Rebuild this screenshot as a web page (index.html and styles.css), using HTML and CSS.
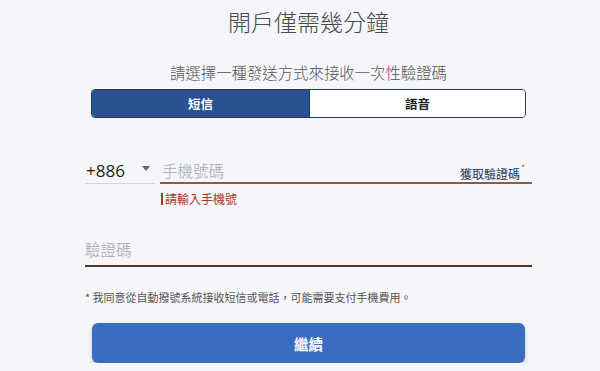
FILE: index.html
```html
<!DOCTYPE html>
<html lang="zh-Hant">
<head>
<meta charset="utf-8">
<title>開戶僅需幾分鐘</title>
<link rel="stylesheet" href="styles.css">
</head>
<body>
<main class="page">
  <h1 class="title">開戶僅需幾分鐘</h1>
  <p class="subtitle">請選擇一種發送方式來接收一次性驗證碼</p>
  <div class="toggle">
    <button class="seg seg-on">短信</button>
    <button class="seg">語音</button>
  </div>
  <div class="phone-row">
    <div class="country">
      <span class="code">+886</span>
      <svg class="caret" width="8" height="6" viewBox="0 0 8 6"><path d="M0 0 L8 0 L4 5 Z" fill="#666"/></svg>
    </div>
    <div class="phone">
      <span class="ph">手機號碼</span>
      <a class="get-code">獲取驗證碼<sup>*</sup></a>
    </div>
  </div>
  <div class="error"><span class="bar"></span>請輸入手機號</div>
  <div class="code-field"><span class="ph">驗證碼</span></div>
  <p class="consent">* 我同意從自動撥號系統接收短信或電話，可能需要支付手機費用。</p>
  <button class="submit">繼續</button>
</main>
</body>
</html>
```
FILE: styles.css
```css
html, body {
  margin: 0;
  padding: 0;
  background: #f4f6f9;
}
body {
  font-family: "Noto Sans CJK TC", "Noto Sans", sans-serif;
  color: #333;
}
.page {
  width: 447px;
  margin-left: 85px;
  display: flex;
  flex-direction: column;
}
.title {
  margin: 6px 0 0;
  font-size: 23px;
  line-height: 30px;
  font-weight: 300;
  text-align: center;
  color: #4a4a4a;
}
.subtitle {
  margin: 26px 0 0;
  font-size: 15.4px;
  line-height: 20px;
  font-weight: 300;
  text-align: center;
  color: #555;
}
.toggle {
  margin: 7px 6px 0;
  height: 29px;
  display: flex;
  border: 1px solid #2a3a50;
  border-radius: 4px;
  overflow: hidden;
  box-sizing: border-box;
  background: #fff;
}
.seg {
  flex: 1;
  border: 0;
  margin: 0;
  padding: 0;
  background: #fff;
  font-family: inherit;
  font-size: 12.5px;
  font-weight: 700;
  color: #222;
}
.seg-on {
  flex: 0 0 218px;
  background: #2a5293;
  color: #fff;
  border-right: 1px solid #2a3a50;
}
.phone-row {
  margin-top: 39px;
  display: flex;
  align-items: flex-end;
  gap: 5px;
}
.country {
  width: 70px;
  height: 26px;
  display: flex;
  align-items: center;
  border-bottom: 1px solid #d4d6da;
}
.code {
  font-family: "Open Sans", "Noto Sans", sans-serif;
  font-size: 17px;
  color: #222;
  width: 56px;
  padding-left: 1px;
}
.caret {
  margin-top: -2px;
}
.phone {
  flex: 1;
  height: 25px;
  display: flex;
  align-items: center;
  justify-content: space-between;
  border-bottom: 2px solid #8c5a48;
}
.ph {
  font-size: 15.5px;
  font-weight: 300;
  color: #a6a8ab;
  padding-left: 2px;
}
.get-code {
  align-self: flex-end;
  font-size: 12px;
  line-height: 14px;
  color: #1f3656;
  margin-right: 12px;
  margin-bottom: 1px;
  position: relative;
}
.get-code sup {
  position: absolute;
  right: -5px;
  top: -6px;
  font-size: 8px;
  color: #555;
}
.error {
  margin: 7px 0 0 76px;
  font-size: 12px;
  line-height: 16px;
  color: #b0321e;
  display: flex;
  align-items: center;
}
.bar {
  width: 2px;
  height: 12px;
  background: #b0321e;
  margin-right: 2px;
}
.code-field {
  margin-top: 25px;
  height: 33px;
  display: flex;
  align-items: center;
  border-bottom: 2px solid #5a3328;
}
.code-field .ph {
  padding-left: 0;
}
.consent {
  margin: 23px 0 0;
  font-size: 11px;
  line-height: 14px;
  color: #555;
}
.submit {
  margin: 19px 7px 0 7px;
  height: 40px;
  border: 0;
  border-radius: 6px;
  background: #3a6dc0;
  color: #fff;
  font-family: inherit;
  font-size: 14.5px;
  font-weight: 700;
  box-shadow: 0 2px 4px rgba(0, 0, 0, 0.18);
}
```
